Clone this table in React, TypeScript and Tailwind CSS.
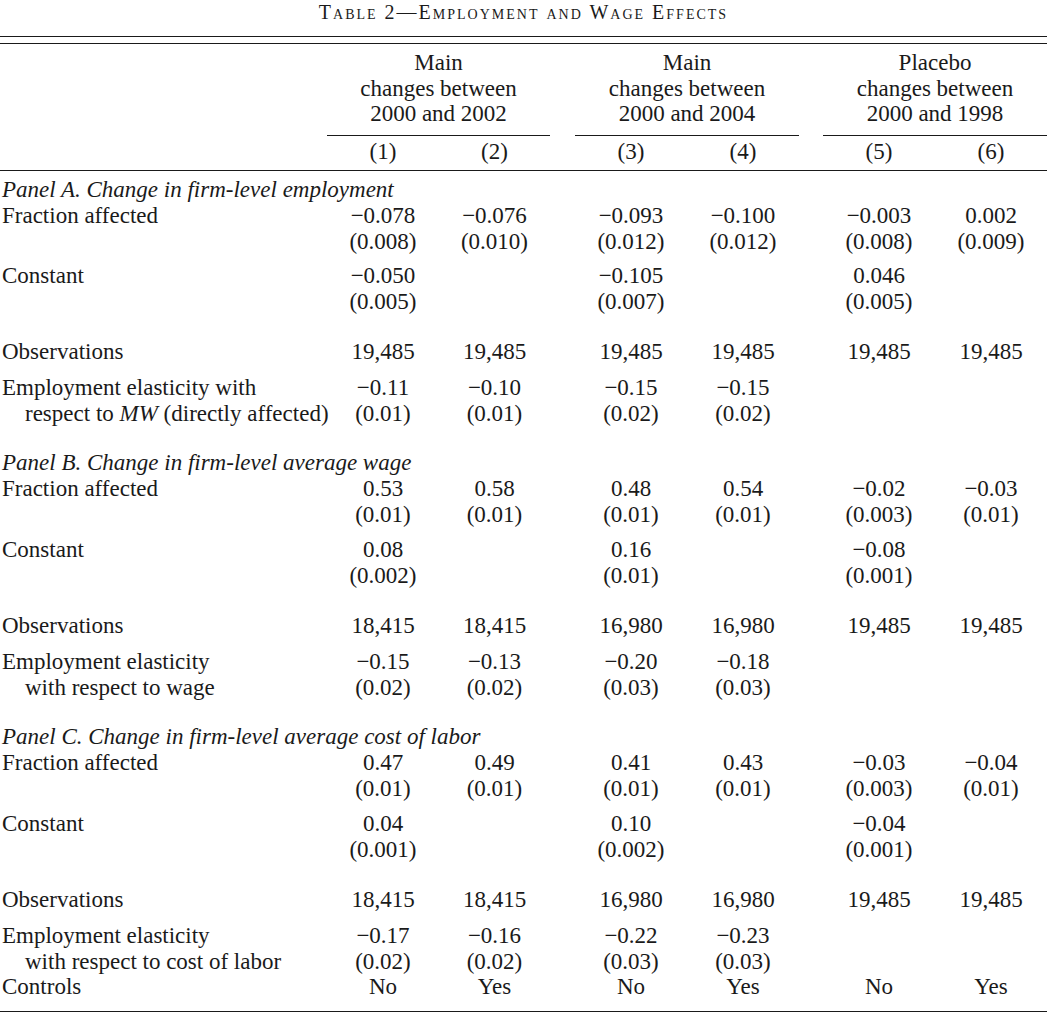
import React from "react";

// column template: label | (1) (2) | gap | (3) (4) | gap | (5) (6)
const grid = "grid grid-cols-[327px_112px_111px_25px_112px_112px_24px_112px_112px]";
const starts = ["col-start-2", "col-start-3", "col-start-5", "col-start-6", "col-start-8", "col-start-9"];

type Cell = string[] | null;

const Row = ({ label, cells, className = "" }: { label: React.ReactNode[]; cells: Cell[]; className?: string }) => (
  <div className={`${grid} ${className}`}>
    <div className="col-start-1 row-start-1 pl-[2px]">
      {label.map((l, i) => (
        <div key={i} className={i > 0 ? "pl-[23px] whitespace-nowrap" : "whitespace-nowrap"}>
          {l}
        </div>
      ))}
    </div>
    {cells.map((c, i) =>
      c ? (
        <div key={i} className={`${starts[i]} row-start-1 text-center`}>
          {c.map((v, j) => (
            <div key={j}>{v}</div>
          ))}
        </div>
      ) : null
    )}
  </div>
);

const Panel = ({ title }: { title: string }) => <div className="pl-[2px] italic whitespace-nowrap">{title}</div>;

const M = "\u2212";

export default function App() {
  return (
    <div className="w-[1047px] bg-white text-[#1a1a1a] font-['Liberation_Serif','Times_New_Roman',serif] text-[23px] leading-[26px]">
      <div className="h-[24px] text-center text-[20px] leading-[24px] tracking-[2px] [font-variant:small-caps]">
        Table 2—Employment and Wage Effects
      </div>
      <div className="mt-[12px] h-[7px] border-t border-[#1a1a1a]" />

      {/* column headings */}
      <div className={`${grid} border-t border-b border-[#1a1a1a] pt-[6px] pb-[5px]`}>
        <div className="col-start-2 col-span-2 row-start-1 border-b border-[#1a1a1a] pb-[8px] text-center leading-[25.5px]">
          <div>Main</div>
          <div>changes between</div>
          <div>2000 and 2002</div>
        </div>
        <div className="col-start-5 col-span-2 row-start-1 border-b border-[#1a1a1a] pb-[8px] text-center leading-[25.5px]">
          <div>Main</div>
          <div>changes between</div>
          <div>2000 and 2004</div>
        </div>
        <div className="col-start-8 col-span-2 row-start-1 border-b border-[#1a1a1a] pb-[8px] text-center leading-[25.5px]">
          <div>Placebo</div>
          <div>changes between</div>
          <div>2000 and 1998</div>
        </div>
        {["(1)", "(2)", "(3)", "(4)", "(5)", "(6)"].map((n, i) => (
          <div key={n} className={`${starts[i]} row-start-2 pt-[3px] text-center`}>
            {n}
          </div>
        ))}
      </div>

      <div className="pt-[6px] pb-[12px] border-b border-[#1a1a1a]">
        {/* Panel A */}
        <Panel title="Panel A. Change in firm-level employment" />
        <Row
          className="mb-[8px]"
          label={["Fraction affected"]}
          cells={[
            [`${M}0.078`, "(0.008)"],
            [`${M}0.076`, "(0.010)"],
            [`${M}0.093`, "(0.012)"],
            [`${M}0.100`, "(0.012)"],
            [`${M}0.003`, "(0.008)"],
            ["0.002", "(0.009)"],
          ]}
        />
        <Row
          className="mb-[24px]"
          label={["Constant"]}
          cells={[[`${M}0.050`, "(0.005)"], null, [`${M}0.105`, "(0.007)"], null, ["0.046", "(0.005)"], null]}
        />
        <Row
          className="mb-[10px]"
          label={["Observations"]}
          cells={[["19,485"], ["19,485"], ["19,485"], ["19,485"], ["19,485"], ["19,485"]]}
        />
        <Row
          className="mb-[23px]"
          label={[
            "Employment elasticity with",
            <>
              respect to <i>MW</i> (directly affected)
            </>,
          ]}
          cells={[
            [`${M}0.11`, "(0.01)"],
            [`${M}0.10`, "(0.01)"],
            [`${M}0.15`, "(0.02)"],
            [`${M}0.15`, "(0.02)"],
            null,
            null,
          ]}
        />

        {/* Panel B */}
        <Panel title="Panel B. Change in firm-level average wage" />
        <Row
          className="mb-[9px]"
          label={["Fraction affected"]}
          cells={[
            ["0.53", "(0.01)"],
            ["0.58", "(0.01)"],
            ["0.48", "(0.01)"],
            ["0.54", "(0.01)"],
            [`${M}0.02`, "(0.003)"],
            [`${M}0.03`, "(0.01)"],
          ]}
        />
        <Row
          className="mb-[24px]"
          label={["Constant"]}
          cells={[["0.08", "(0.002)"], null, ["0.16", "(0.01)"], null, [`${M}0.08`, "(0.001)"], null]}
        />
        <Row
          className="mb-[10px]"
          label={["Observations"]}
          cells={[["18,415"], ["18,415"], ["16,980"], ["16,980"], ["19,485"], ["19,485"]]}
        />
        <Row
          className="mb-[23px]"
          label={["Employment elasticity", "with respect to wage"]}
          cells={[
            [`${M}0.15`, "(0.02)"],
            [`${M}0.13`, "(0.02)"],
            [`${M}0.20`, "(0.03)"],
            [`${M}0.18`, "(0.03)"],
            null,
            null,
          ]}
        />

        {/* Panel C */}
        <Panel title="Panel C. Change in firm-level average cost of labor" />
        <Row
          className="mb-[9px]"
          label={["Fraction affected"]}
          cells={[
            ["0.47", "(0.01)"],
            ["0.49", "(0.01)"],
            ["0.41", "(0.01)"],
            ["0.43", "(0.01)"],
            [`${M}0.03`, "(0.003)"],
            [`${M}0.04`, "(0.01)"],
          ]}
        />
        <Row
          className="mb-[24px]"
          label={["Constant"]}
          cells={[["0.04", "(0.001)"], null, ["0.10", "(0.002)"], null, [`${M}0.04`, "(0.001)"], null]}
        />
        <Row
          className="mb-[10px]"
          label={["Observations"]}
          cells={[["18,415"], ["18,415"], ["16,980"], ["16,980"], ["19,485"], ["19,485"]]}
        />
        <Row
          label={["Employment elasticity", "with respect to cost of labor"]}
          cells={[
            [`${M}0.17`, "(0.02)"],
            [`${M}0.16`, "(0.02)"],
            [`${M}0.22`, "(0.03)"],
            [`${M}0.23`, "(0.03)"],
            null,
            null,
          ]}
        />
        <Row
          className="leading-[24px]"
          label={["Controls"]}
          cells={[["No"], ["Yes"], ["No"], ["Yes"], ["No"], ["Yes"]]}
        />
      </div>
    </div>
  );
}
